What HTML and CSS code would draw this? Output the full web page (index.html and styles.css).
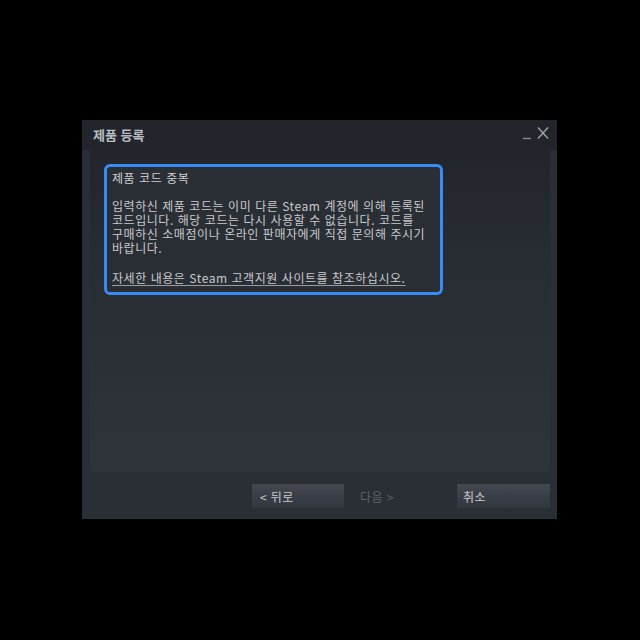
FILE: index.html
```html
<!DOCTYPE html>
<html lang="ko">
<head>
<meta charset="utf-8">
<title>제품 등록</title>
<link rel="stylesheet" href="styles.css">
</head>
<body>
<div class="window">
  <div class="titlebar">
    <span class="title">제품 등록</span>
    <div class="controls">
      <svg class="ctl" width="10" height="14" viewBox="0 0 10 14"><line x1="1" y1="12.5" x2="9" y2="12.5" stroke="#8d9196" stroke-width="1.3"/></svg>
      <svg class="ctl" width="12" height="14" viewBox="0 0 12 14"><path d="M1 1.5 L11 12.5 M11 1.5 L1 12.5" stroke="#a2a6ab" stroke-width="1.3" fill="none"/></svg>
    </div>
  </div>
  <div class="panel">
    <div class="notice">
      <p class="heading">제품 코드 중복</p>
      <p>입력하신 제품 코드는 이미 다른 Steam 계정에 의해 등록된<br>코드입니다. 해당 코드는 다시 사용할 수 없습니다. 코드를<br>구매하신 소매점이나 온라인 판매자에게 직접 문의해 주시기<br>바랍니다.</p>
      <p><a class="link" href="#">자세한 내용은 Steam 고객지원 사이트를 참조하십시오.</a></p>
    </div>
  </div>
  <div class="footer">
    <button class="btn">&lt; 뒤로</button>
    <button class="btn disabled" disabled>다음 &gt;</button>
    <button class="btn cancel">취소</button>
  </div>
</div>
</body>
</html>
```

FILE: styles.css
```css
html, body {
  margin: 0;
  padding: 0;
  background: #000;
}

body {
  width: 640px;
  height: 640px;
  padding: 120px 0 0 82px;
  box-sizing: border-box;
  font-family: "Noto Sans CJK KR", "Noto Sans", sans-serif;
}

.window {
  width: 475px;
  height: 399px;
  background: #2a2e35;
  display: flex;
  flex-direction: column;
}

.titlebar {
  height: 30px;
  flex: none;
  display: flex;
  align-items: center;
  justify-content: space-between;
  padding: 0 8px 0 11px;
  background: #22262c;
}

.title {
  font-size: 13px;
  font-weight: bold;
  color: #b9bdc2;
  line-height: 16px;
}

.controls {
  display: flex;
  align-items: center;
  gap: 5px;
  margin-top: -4px;
}

.ctl {
  display: block;
}

.panel {
  margin: 0 7px 0 8px;
  height: 322px;
  flex: none;
  box-sizing: border-box;
  padding: 14px 0 0 14px;
  background: linear-gradient(to bottom, #22262c 0%, #282c33 35%, #2f333a 100%);
}

.notice {
  width: 339px;
  height: 131px;
  box-sizing: border-box;
  border: 3px solid #3a8cf5;
  border-radius: 6px;
  padding: 4px 5px 0 5px;
  background: #2a2e35;
  font-size: 12px;
  line-height: 14px;
  letter-spacing: 0.55px;
  color: #c9cacc;
}

.notice p {
  margin: 0 0 14px 0;
  white-space: nowrap;
}

.notice p:last-child {
  margin-bottom: 0;
  padding-top: 2px;
}

.heading {
  color: #cfd0d2;
}

.link {
  color: #c9cacc;
  text-decoration: underline;
  text-decoration-color: #9a9c9f;
  text-underline-offset: 2px;
}

.footer {
  flex: 1;
  display: flex;
  align-items: flex-start;
  justify-content: flex-end;
  padding: 12px 7px 0 0;
  gap: 8px;
}

.btn {
  width: 92px;
  height: 24px;
  border: none;
  border-radius: 0;
  padding: 0 0 0 8px;
  text-align: left;
  font-family: "Noto Sans CJK KR", "Noto Sans", sans-serif;
  font-size: 12px;
  letter-spacing: 0.4px;
  color: #c8cacd;
  background: linear-gradient(to bottom, #444951 0%, #3a3f47 50%, #33373e 100%);
}

.btn.disabled {
  background: transparent;
  color: #5e6269;
}

.btn.cancel {
  width: 93px;
  padding-left: 6px;
  margin-left: 5px;
}
```
